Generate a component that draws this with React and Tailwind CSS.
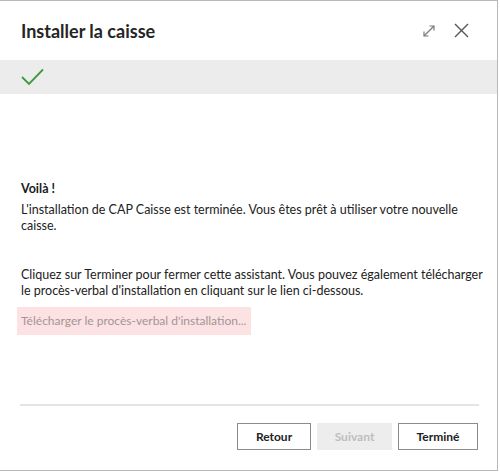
import React from "react";

const ExpandIcon = () => (
  <svg width="14" height="14" viewBox="0 0 14 14" fill="none" stroke="#7a7a7a" strokeWidth="1.2">
    <path d="M2 12 L12 2" />
    <path d="M7.5 2 H12 V6.5" />
    <path d="M2 7.5 V12 H6.5" />
  </svg>
);

const CloseIcon = () => (
  <svg width="15" height="15" viewBox="0 0 15 15" fill="none" stroke="#5a5a5a" strokeWidth="1.4">
    <path d="M1 1 L14 14" />
    <path d="M14 1 L1 14" />
  </svg>
);

const CheckIcon = () => (
  <svg width="23" height="18" viewBox="0 0 23 18" fill="none" stroke="#3e9a3e" strokeWidth="1.8">
    <path d="M1 9 L8 16 L22 1.5" />
  </svg>
);

export default function App() {
  return (
    <div
      className="w-[498px] h-[471px] bg-white border-t border-r border-b border-[#b8b8b8] flex flex-col text-[#222]"
      style={{ fontFamily: 'Lato, "Noto Sans", sans-serif' }}
    >
      {/* Header */}
      <div className="h-[59px] flex items-center justify-between pl-[21px] pr-[28px]">
        <h1 className="text-[18px] font-bold text-[#252525] leading-none">Installer la caisse</h1>
        <div className="flex items-center gap-[18px]">
          <ExpandIcon />
          <CloseIcon />
        </div>
      </div>

      {/* Step bar */}
      <div className="h-[34px] bg-[#ececec] flex items-center pl-[21px]">
        <CheckIcon />
      </div>

      {/* Body */}
      <div className="flex-1 pl-[21px] pr-[10px] pt-[87px] text-[12.5px] leading-[16px]">
        <p className="font-bold text-[#1a1a1a]">Voilà !</p>
        <p className="mt-[5px]">
          L'installation de CAP Caisse est terminée. Vous êtes prêt à utiliser votre nouvelle
          <br />
          caisse.
        </p>
        <p className="mt-[33px]">
          Cliquez sur Terminer pour fermer cette assistant. Vous pouvez également télécharger
          <br />
          le procès-verbal d'installation en cliquant sur le lien ci-dessous.
        </p>
        <div className="mt-[8px] -ml-[4px] w-[234px] h-[28px] bg-[#fde2e3] flex items-center pl-[4px] text-[12px] text-[#a09696] whitespace-nowrap">
          Télécharger le procès-verbal d'installation...
        </div>
      </div>

      {/* Footer */}
      <div className="px-[20px]">
        <div className="h-[2px] bg-[#e4e4e4] mr-[-2px]" />
      </div>
      <div className="h-[64px] flex items-start justify-end gap-[6px] pr-[19px] pt-[17px] text-[12px] font-bold">
        <button className="w-[74px] h-[27px] border border-[#8c8c8c] bg-white text-[#222]">Retour</button>
        <button className="w-[75px] h-[27px] bg-[#ededed] text-[#bdbdbd]">Suivant</button>
        <button className="w-[80px] h-[27px] border border-[#8c8c8c] bg-white text-[#222]">Terminé</button>
      </div>
    </div>
  );
}
